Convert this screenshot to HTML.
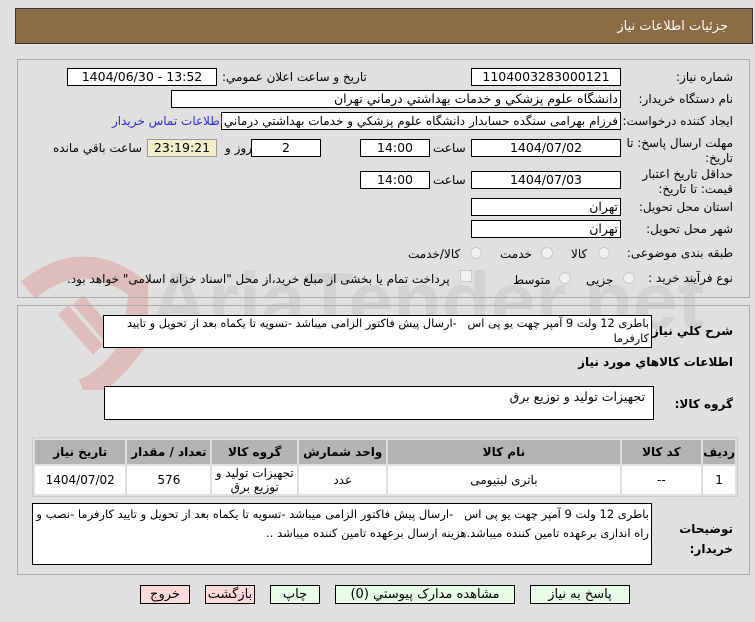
<!DOCTYPE html>
<html><head><meta charset="utf-8"><style>
*{box-sizing:border-box;margin:0;padding:0}
body{width:755px;height:622px;background:#e0e0e0;position:relative;overflow:hidden;font-family:Tahoma,"DejaVu Sans","Liberation Sans",sans-serif;font-size:12px;color:#000}
.a{position:absolute;white-space:nowrap}
.in{position:absolute;background:#fff;border:1px solid #000;height:18px;line-height:16px;text-align:center;font-size:12.5px;overflow:hidden}
.lb{position:absolute;right:22px;direction:rtl;text-align:right;font-size:12px}
.r{direction:rtl}
.panel{position:absolute;border:1px solid #a8a8a8}
.rad{position:absolute;width:12px;height:12px;border-radius:50%;border:1px solid #c8c8c8;background:#f2f2f2}
.btn{position:absolute;top:585px;height:19px;border:1px solid #000;line-height:17px;text-align:center;font-size:13px;direction:rtl}
table{border-collapse:separate;border-spacing:2px;position:absolute;left:32px;top:437px;width:706px;background:#e0e0e0;border:1px solid #ccc}
th{background:#b4b4b4;height:24px;font-size:12px;direction:rtl}
td{background:#fff;height:28px;text-align:center;font-size:12px;direction:rtl;line-height:14px}
</style></head><body>
<div class="a" style="left:15px;top:8px;width:738px;height:36px;background:#8b6b43;border:1px solid #333"></div>
<div class="a r" style="right:27px;top:19px;color:#fff;font-size:13px">جزئیات اطلاعات نیاز</div>

<svg class="a" style="left:18px;top:250px;opacity:.5" width="130" height="140" viewBox="0 0 130 140"><path d="M10 40 Q65 -5 122 40 L115 95 Q90 130 65 140" fill="none" stroke="#d99" stroke-width="22"/><path d="M45 60 L80 100 M60 50 L95 90" stroke="#d99" stroke-width="14"/></svg>
<div class="a" style="left:150px;top:255px;font-size:80px;font-weight:bold;color:#c9c9c9;opacity:.6;font-family:'Liberation Sans',sans-serif">AriaTender.net</div>

<div class="panel" style="left:17px;top:59px;width:733px;height:239px"></div>
<div class="panel" style="left:17px;top:305px;width:733px;height:270px"></div>

<div class="lb" style="top:70px">شماره نیاز:</div>
<div class="in" style="left:471px;top:68px;width:150px">1104003283000121</div>
<div class="a r" style="left:222px;top:70px;font-size:12px">تاريخ و ساعت اعلان عمومي:</div>
<div class="in" style="left:67px;top:68px;width:150px">1404/06/30 - 13:52</div>

<div class="lb" style="top:92px">نام دستگاه خريدار:</div>
<div class="in r" style="left:171px;top:90px;width:450px;text-align:right;padding-right:2px">دانشگاه علوم پزشکي و خدمات بهداشتي درماني تهران</div>

<div class="lb" style="top:114px">ایجاد کننده درخواست:</div>
<div class="in r" style="left:221px;top:112px;width:400px;text-align:right;padding-right:2px;font-size:12px">فرزام بهرامی سنگده حسابدار دانشگاه علوم پزشکي و خدمات بهداشتي درماني</div>
<div class="a r" style="left:112px;top:114px;color:#2a2ae0;font-size:12px">اطلاعات تماس خریدار</div>

<div class="lb" style="top:136px;line-height:15px">مهلت ارسال پاسخ: تا<br>تاریخ:</div>
<div class="in" style="left:471px;top:139px;width:150px">1404/07/02</div>
<div class="a r" style="left:433px;top:141px;font-size:12px">ساعت</div>
<div class="in" style="left:360px;top:139px;width:70px">14:00</div>
<div class="in" style="left:251px;top:139px;width:70px">2</div>
<div class="a r" style="left:225px;top:141px;font-size:12px">روز و</div>
<div class="in" style="left:147px;top:139px;width:70px;background:#f3f0cc;border-color:#999">23:19:21</div>
<div class="a r" style="left:53px;top:141px;font-size:12px">ساعت باقي مانده</div>

<div class="lb" style="top:167px;line-height:15px">حداقل تاریخ اعتبار<br>قیمت: تا تاریخ:</div>
<div class="in" style="left:471px;top:171px;width:150px">1404/07/03</div>
<div class="a r" style="left:433px;top:173px;font-size:12px">ساعت</div>
<div class="in" style="left:360px;top:171px;width:70px">14:00</div>

<div class="lb" style="top:200px">استان محل تحویل:</div>
<div class="in r" style="left:471px;top:198px;width:150px;text-align:right;padding-right:2px">تهران</div>
<div class="lb" style="top:222px">شهر محل تحویل:</div>
<div class="in r" style="left:471px;top:220px;width:150px;text-align:right;padding-right:2px">تهران</div>

<div class="lb" style="top:246px">طبقه بندی موضوعی:</div>
<div class="rad" style="left:598px;top:247px"></div><div class="a r" style="left:571px;top:247px;font-size:12px">کالا</div>
<div class="rad" style="left:541px;top:247px"></div><div class="a r" style="left:500px;top:247px;font-size:12px">خدمت</div>
<div class="rad" style="left:470px;top:247px"></div><div class="a r" style="left:408px;top:247px;font-size:12px">کالا/خدمت</div>

<div class="lb" style="top:271px">نوع فرآیند خرید :</div>
<div class="rad" style="left:623px;top:272px"></div><div class="a r" style="left:586px;top:273px;font-size:12px">جزیی</div>
<div class="rad" style="left:559px;top:272px"></div><div class="a r" style="left:513px;top:273px;font-size:12px">متوسط</div>
<div class="a" style="left:460px;top:270px;width:12px;height:12px;border:1px solid #c8c8c8;background:#f2f2f2"></div>
<div class="a r" style="left:67px;top:272px;font-size:12px">پرداخت تمام یا بخشی از مبلغ خرید،از محل "اسناد خزانه اسلامی" خواهد بود.</div>

<div class="lb" style="top:324px;font-weight:bold">شرح کلي نیاز:</div>
<div class="in r" style="left:103px;top:315px;width:549px;height:33px;text-align:right;padding-right:2px;line-height:15px;white-space:normal;font-size:11.3px">باطری 12 ولت 9 آمپر چهت یو پی اس &nbsp; -ارسال پیش فاکتور الزامی میباشد -تسویه تا یکماه بعد از تحویل و تایید کارفرما</div>
<div class="lb" style="top:355px;font-weight:bold">اطلاعات کالاهاي مورد نياز</div>
<div class="lb" style="top:397px;font-weight:bold">گروه کالا:</div>
<div class="in r" style="left:104px;top:386px;width:550px;height:34px;text-align:right;padding-right:8px;line-height:20px">تجهیزات تولید و توزیع برق</div>

<table>
<tr><th style="width:91px">تاریخ نیاز</th><th style="width:84px">تعداد / مقدار</th><th style="width:86px">گروه کالا</th><th style="width:88px">واحد شمارش</th><th style="width:236px">نام کالا</th><th style="width:81px">کد کالا</th><th>ردیف</th></tr>
<tr><td>1404/07/02</td><td>576</td><td>تجهیزات تولید و توزیع برق</td><td>عدد</td><td>باتری لیتیومی</td><td>--</td><td>1</td></tr>
</table>

<div class="lb" style="top:519px;font-weight:bold;line-height:20px">توضیحات<br>خریدار:</div>
<div class="in r" style="left:32px;top:503px;width:620px;height:62px;text-align:right;padding:1px 2px;line-height:19px;white-space:normal;font-size:11.5px">باطری 12 ولت 9 آمپر چهت یو پی اس &nbsp; -ارسال پیش فاکتور الزامی میباشد -تسویه تا یکماه بعد از تحویل و تایید کارفرما -نصب و راه اندازی برعهده تامین کننده میباشد.هزینه ارسال برعهده تامین کننده میباشد ..</div>

<div class="btn" style="left:140px;width:50px;background:#fddada">خروج</div>
<div class="btn" style="left:205px;width:50px;background:#fddada">بازگشت</div>
<div class="btn" style="left:270px;width:50px;background:#e8fde8">چاپ</div>
<div class="btn" style="left:335px;width:180px;background:#e8fde8">مشاهده مدارک پیوستي (0)</div>
<div class="btn" style="left:530px;width:100px;background:#e8fde8">پاسخ به نیاز</div>
</body></html>
